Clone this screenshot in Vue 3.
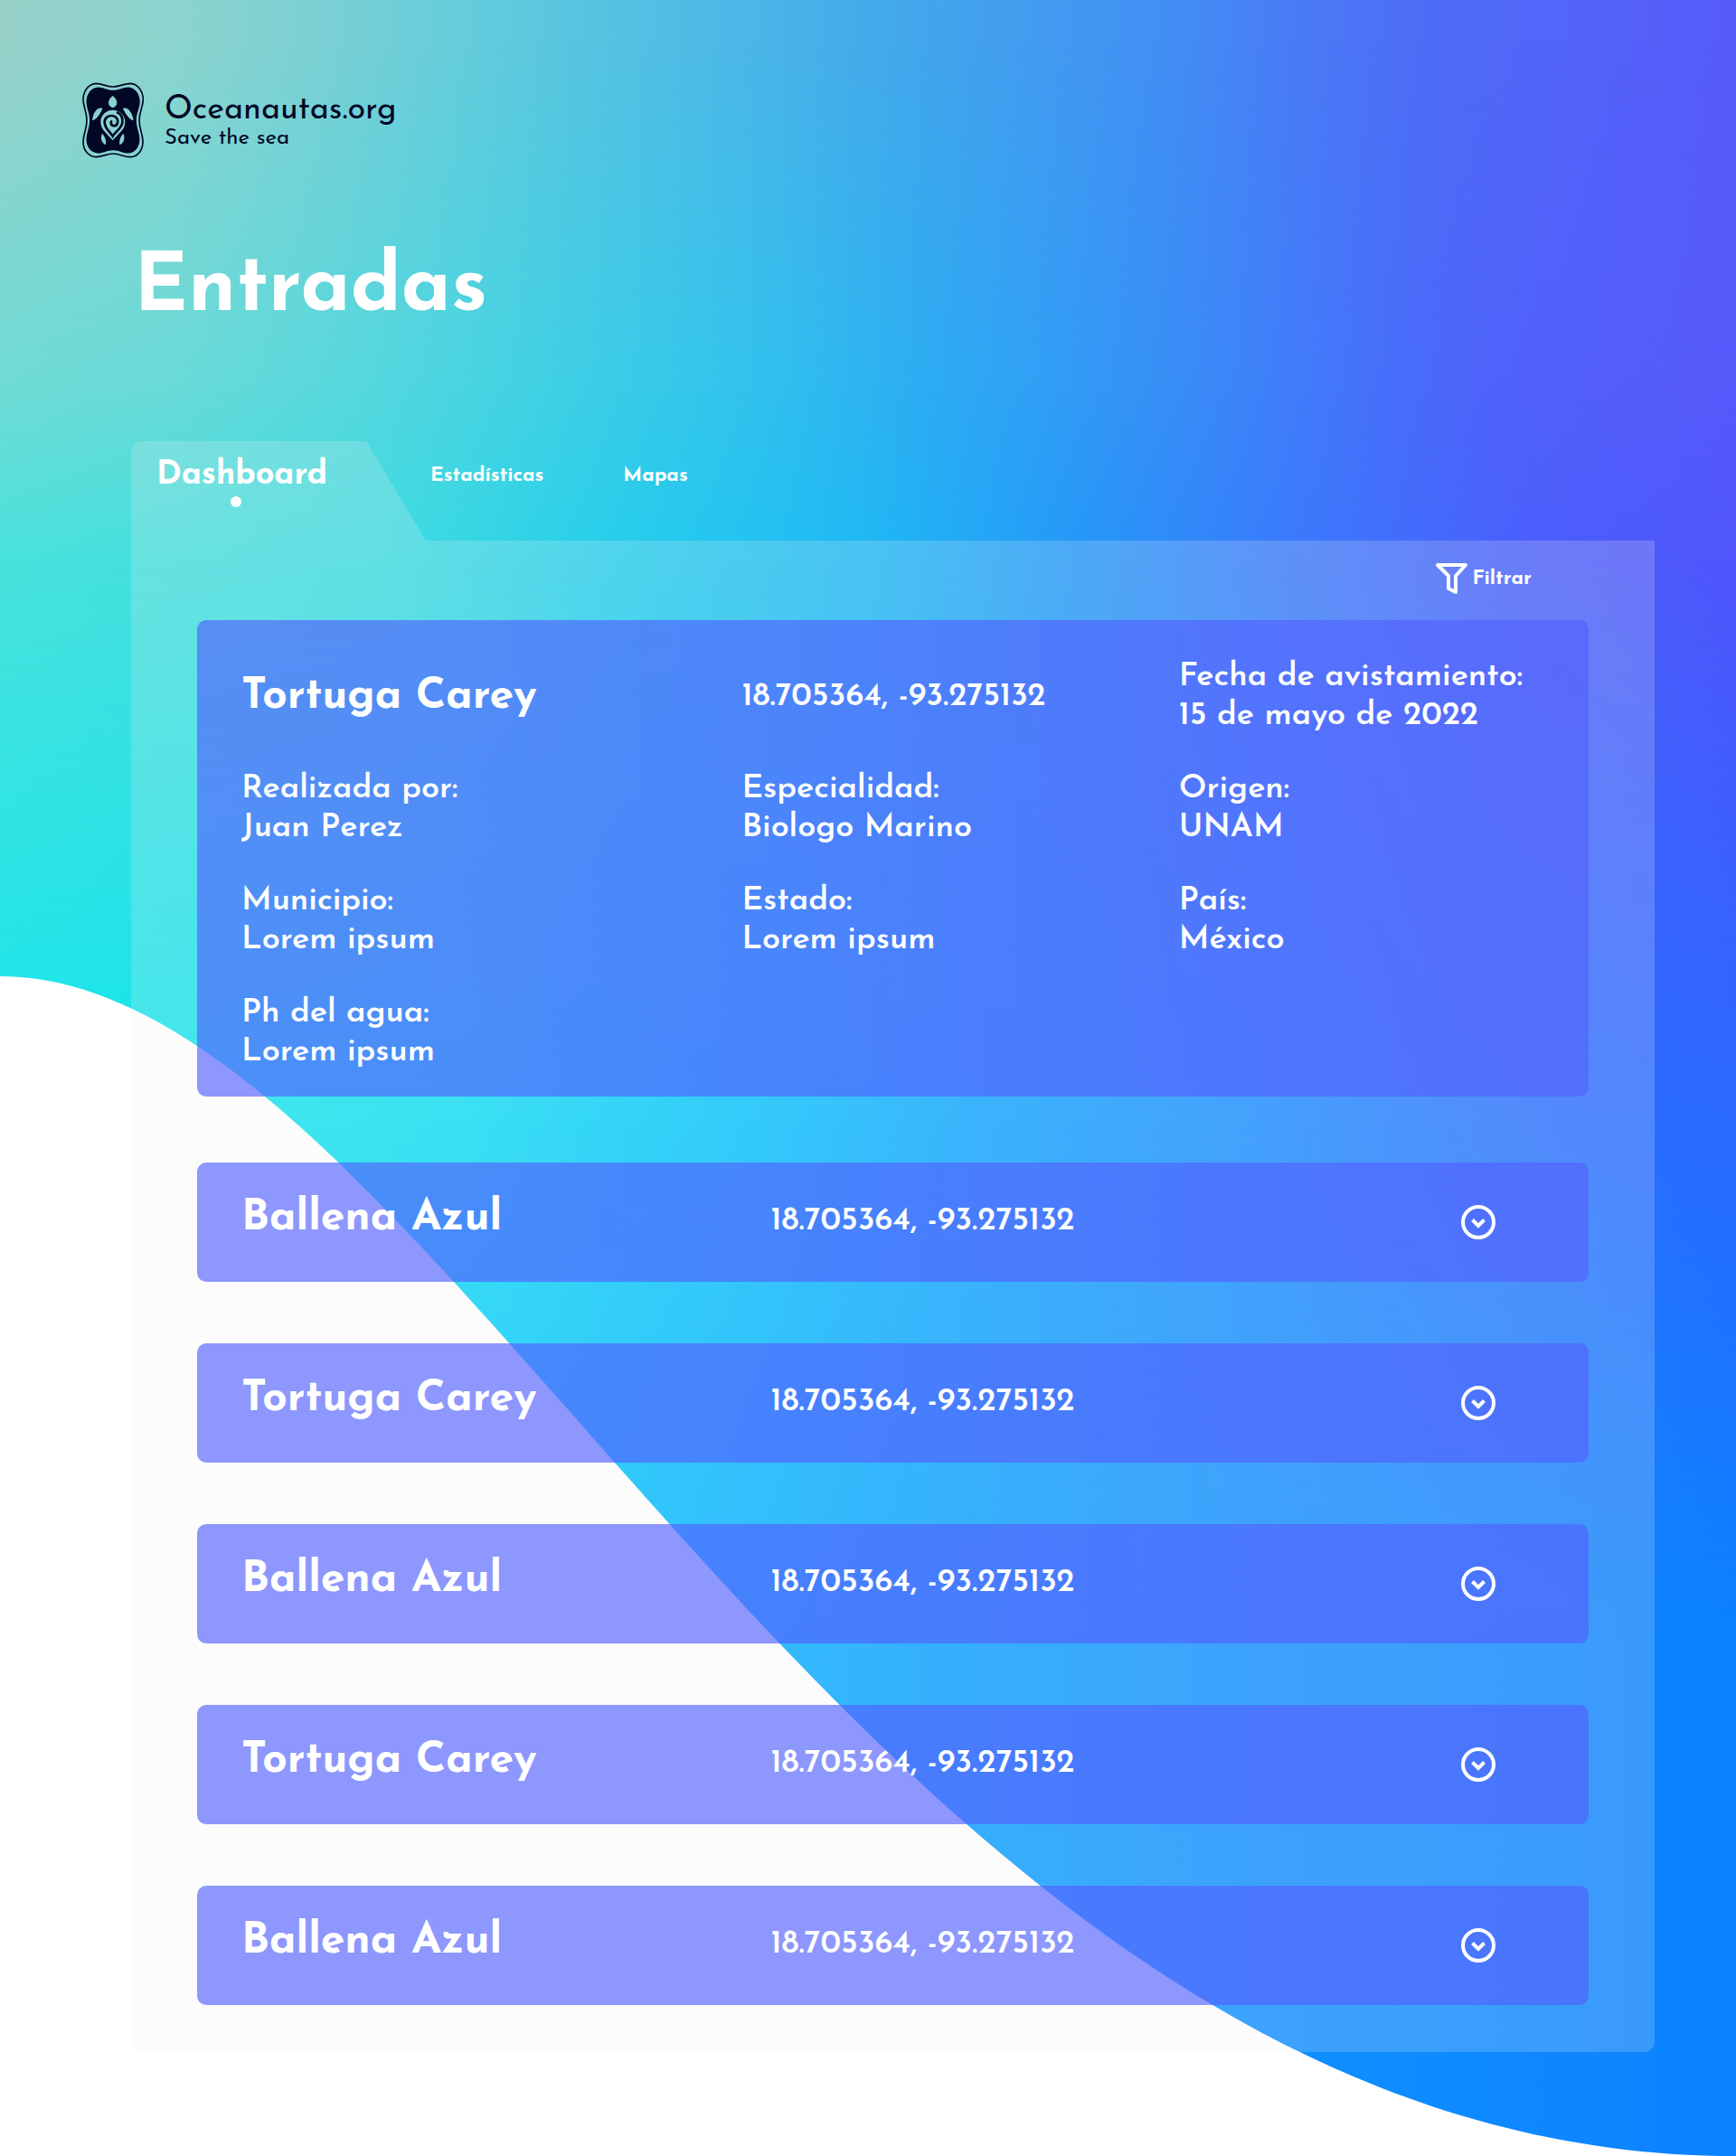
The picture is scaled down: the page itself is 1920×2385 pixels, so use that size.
<script setup>
import { ref } from 'vue'

const tabs = ['Estadísticas', 'Mapas']

const featured = {
  name: 'Tortuga Carey',
  coords: '18.705364, -93.275132',
  details: [
    { label: 'Realizada por:', value: 'Juan Perez' },
    { label: 'Especialidad:', value: 'Biologo Marino' },
    { label: 'Origen:', value: 'UNAM' },
    { label: 'Municipio:', value: 'Lorem ipsum' },
    { label: 'Estado:', value: 'Lorem ipsum' },
    { label: 'País:', value: 'México' },
    { label: 'Ph del agua:', value: 'Lorem ipsum' },
  ],
}

const entries = ref([
  { id: 1, name: 'Ballena Azul', coords: '18.705364, -93.275132' },
  { id: 2, name: 'Tortuga Carey', coords: '18.705364, -93.275132' },
  { id: 3, name: 'Ballena Azul', coords: '18.705364, -93.275132' },
  { id: 4, name: 'Tortuga Carey', coords: '18.705364, -93.275132' },
  { id: 5, name: 'Ballena Azul', coords: '18.705364, -93.275132' },
])
</script>

<template>
  <div class="page">
    <div class="sea" aria-hidden="true">
      <div class="band band-1"></div>
      <div class="band band-2"></div>
      <div class="band band-3"></div>
      <div class="band band-4"></div>
      <div class="band band-5"></div>
      <svg class="wave" viewBox="0 0 1920 2385" preserveAspectRatio="none">
        <path d="M0 1080 C493 1080 954 2385 1920 2385 L0 2385 Z" fill="#fff" />
      </svg>
    </div>

    <header class="brand">
      <svg class="badge" viewBox="0 0 204 250" aria-hidden="true">
        <defs>
          <path
            id="shield"
            d="M46 3C66 3 80 14 102 14C125 14 138 3 160 3C186 5 202 30 202 56C202 80 189 95 189 125C189 155 201 170 201 196C201 224 184 247 158 247C138 247 125 236 102 236C80 236 66 247 46 247C20 246 3 224 3 197C3 170 15 155 15 125C15 95 3 80 3 56C3 30 20 4 46 3Z"
          />
        </defs>
        <use href="#shield" fill="none" stroke="#020726" stroke-width="5" />
        <use href="#shield" fill="#020726" transform="translate(11 13) scale(.892 .896)" />
        <g fill="#8ad3cf">
          <path d="M101 44C110 51 115 59 115 67C115 75 110 80 101 84C92 80 87 75 87 67C87 59 92 51 101 44Z" />
          <path d="M67 86C57 82 48 88 42 97C36 106 33 118 34 126C46 123 59 106 67 86Z" />
          <path d="M135 86C145 82 154 88 160 97C166 106 170 118 169 126C157 123 144 106 135 86Z" />
          <path d="M66 169C60 180 61 198 78 207C79 194 79 184 66 169Z" />
          <path d="M136 169C142 180 141 198 124 207C123 194 123 184 136 169Z" />
          <path d="M101 91C124 91 142 108 142 130C142 158 118 170 101 192C84 170 61 158 61 130C61 108 79 91 101 91Z" />
        </g>
        <path
          d="M114 98C129 104 135 117 133 133C131 152 111 161 101 178C92 163 74 153 74 131C74 117 86 109 99 110C112 111 120 121 117 134C113 147 97 147 95 134C95 130 97 128 99 127"
          fill="none"
          stroke="#020726"
          stroke-width="8"
        />
      </svg>
      <div class="brand-text">
        <p class="brand-name">Oceanautas.org</p>
        <p class="brand-tag">Save the sea</p>
      </div>
    </header>

    <main class="content">
      <h1 class="title">Entradas</h1>

      <nav class="tabs">
        <a class="tab-active" href="#dashboard" aria-current="page">
          Dashboard
          <span class="dot"></span>
        </a>
        <a v-for="tab in tabs" :key="tab" class="tab" :href="'#' + tab.toLowerCase()">{{ tab }}</a>
      </nav>

      <section class="panel">
        <div class="toolbar">
          <button class="filter" type="button">
            <svg viewBox="0 0 36 36" aria-hidden="true">
              <path
                d="M2 3H33L22 15V33L14 29V15Z"
                fill="none"
                stroke="#fff"
                stroke-width="4"
                stroke-linejoin="round"
              />
            </svg>
            Filtrar
          </button>
        </div>

        <article class="card open">
          <h2 class="name">{{ featured.name }}</h2>
          <p class="coords">{{ featured.coords }}</p>
          <p class="detail">Fecha de avistamiento:<br />15 de mayo de 2022</p>
          <p v-for="item in featured.details" :key="item.label" class="detail">
            {{ item.label }}<br />{{ item.value }}
          </p>
        </article>

        <div class="list">
          <article v-for="entry in entries" :key="entry.id" class="card closed">
            <h2 class="name">{{ entry.name }}</h2>
            <p class="coords">{{ entry.coords }}</p>
            <button class="expand" type="button" :aria-label="'Ver ' + entry.name">
              <svg viewBox="0 0 38 38" aria-hidden="true">
                <circle cx="19" cy="19" r="17" fill="none" stroke="#fff" stroke-width="4" />
                <path d="M12.500 16.500L19 23L25.500 16.500" fill="none" stroke="#fff" stroke-width="4" />
              </svg>
            </button>
          </article>
        </div>
      </section>
    </main>
  </div>
</template>

<style>
body {
  margin: 0;
}
</style>

<style scoped>
.page {
  position: relative;
  box-sizing: border-box;
  padding: 91px 90px 115px 91px;
  color: #fff;
  font-family: "Josefin Sans", Lato, sans-serif;
}

/* Mesh gradient: each band fades in over the one before it. */
.sea,
.band,
.wave {
  position: absolute;
  inset: 0;
  width: 100%;
  height: 100%;
}
.sea {
  z-index: -1;
  overflow: hidden;
}
.band-1 {
  background: linear-gradient(90deg, #97d1c9, #8cd4ce 10%, #7cd0d3 18%, #64ccdb 27%, #58c5e0 33%, #4cb8e7 42%, #42a8eb 52%, #429bf0 60%, #428ff4 67%, #4a7af6 75%, #4e6bf5 83%, #5365fa 90%, #565bf8);
}
.band-2 {
  background: linear-gradient(90deg, #6fdbd5, #68dad8 10%, #56d8dd 20%, #42d2e3 30%, #36c9e9 38%, #30bfee 45%, #2cadf2 53%, #309ff5 60%, #378ff6 67%, #407efa 74%, #476efa 80%, #4f63fa 86%, #535efa 92%, #5659fa);
  mask-image: linear-gradient(transparent 2%, #000 18%);
}
.band-3 {
  background: linear-gradient(90deg, #48e2dc, #3edce0 22%, #25cdec 36%, #1fb8f4 50%, #2498f8 62%, #3b78fb 75%, #4a5ffc 88%, #5056fb);
  mask-image: linear-gradient(transparent 18%, #000 26%);
}
.band-4 {
  background: linear-gradient(90deg, #16e6ec, #0fe2ef 20%, #0ddcf4 27%, #05cdfa 36%, #05befe 45%, #0da7ff 55%, #139aff 63%, #198eff 72%, #227fff 80%, #2b72ff 88%, #2a69ff);
  mask-image: linear-gradient(transparent 26%, #000 52%);
}
.band-5 {
  background: linear-gradient(90deg, #01c0ff 30%, #05a5ff 50%, #1090ff 71%, #0d86ff 92%, #0a82ff);
  mask-image: linear-gradient(transparent 52%, #000 76%);
}

.brand {
  display: flex;
  align-items: flex-start;
  gap: 23px;
  color: #020726;
}
.badge {
  width: 68px;
  height: 84px;
}
.brand-text {
  padding-top: 12px;
}
.brand p {
  margin: 0;
}
.brand-name {
  font-size: 36px;
  line-height: 38px;
}
.brand-tag {
  font-size: 24px;
  line-height: 24px;
}

.content {
  margin-left: 54px;
}
.title {
  margin: 86px 0 0;
  padding-left: 3px;
  font-size: 90px;
  line-height: 120px;
  font-weight: 700;
}

.tabs {
  display: flex;
  margin-top: 107px;
  height: 110px;
}
.tabs a {
  color: #fff;
  font-weight: 700;
  text-decoration: none;
}
.tab-active {
  position: relative;
  box-sizing: border-box;
  width: 326px;
  padding: 15px 0 0 28px;
  border-top-left-radius: 12px;
  background: rgba(240, 240, 240, 0.2);
  clip-path: polygon(0 0, 260px 0, 100% 100%, 0 100%);
  font-size: 36px;
  line-height: 46px;
}
.dot {
  position: absolute;
  left: 110px;
  top: 61px;
  width: 12px;
  height: 12px;
  border-radius: 50%;
  background: #fff;
}
.tab {
  padding: 26px 0 0;
  margin-left: 5px;
  font-size: 22px;
  line-height: 26px;
}
.tab + .tab {
  margin-left: 88px;
}

.panel {
  padding: 0 73px 52px;
  border-radius: 0 0 12px 12px;
  background: rgba(240, 240, 240, 0.2);
}
.toolbar {
  display: flex;
  justify-content: flex-end;
  height: 88px;
  padding: 0 63px 4px 0;
  box-sizing: border-box;
  align-items: center;
}
button {
  padding: 0;
  border: 0;
  background: none;
  color: inherit;
  font: inherit;
  cursor: pointer;
}
.filter {
  display: flex;
  align-items: center;
  gap: 4px;
  font-size: 22px;
  font-weight: 700;
}
.filter svg {
  width: 36px;
  height: 36px;
}

.card {
  display: grid;
  box-sizing: border-box;
  border-radius: 10px;
  background: rgba(81, 97, 253, 0.65);
}
.card p,
.card h2 {
  margin: 0;
  white-space: nowrap;
}
.open {
  grid-template-columns: 553fr 483fr 403fr;
  row-gap: 38px;
  align-items: center;
  padding: 42px 50px 27px 49px;
}
.closed {
  grid-template-columns: 585fr 763fr 91fr;
  align-items: baseline;
  padding: 32px 50px 32px 49px;
}
.closed .name {
  padding-bottom: 8px;
}
.list {
  display: flex;
  flex-direction: column;
  gap: 68px;
  margin-top: 73px;
}
.name {
  font-size: 48px;
  line-height: 60px;
  font-weight: 700;
}
.coords {
  font-size: 36px;
  line-height: 43px;
  font-weight: 600;
}
.detail {
  font-size: 36px;
  line-height: 43px;
  font-weight: 600;
}
.expand {
  align-self: center;
  width: 38px;
  height: 38px;
}
.expand svg {
  display: block;
}
</style>
